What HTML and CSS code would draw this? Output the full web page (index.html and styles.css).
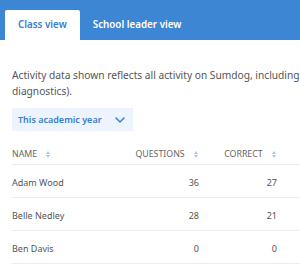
FILE: index.html
```html
<!DOCTYPE html>
<html lang="en">
<head>
<meta charset="UTF-8" />
<meta name="viewport" content="width=device-width, initial-scale=1" />
<title>Class report</title>
<link rel="stylesheet" href="styles.css">
</head>
<body>
  <div class="tabs">
    <div class="tab active">Class view</div>
    <div class="tab">School leader view</div>
  </div>

  <div class="content">
    <p class="note">Activity data shown reflects all activity on Sumdog, including Insights (placement<br>diagnostics).</p>

    <div class="period">
      This academic year
      <svg width="10" height="6" viewBox="0 0 10 6"><path d="M1 1l4 4 4-4" fill="none" stroke="#3a7fcc" stroke-width="1.5" stroke-linecap="round" stroke-linejoin="round"/></svg>
    </div>

    <table class="report">
      <colgroup>
        <col class="col-name"><col class="col-num"><col class="col-num"><col class="col-wide">
      </colgroup>
      <thead>
        <tr>
          <th class="left">Name <span class="sort"></span></th>
          <th>Questions <span class="sort"></span></th>
          <th>Correct <span class="sort"></span></th>
          <th>Accuracy <span class="sort"></span></th>
        </tr>
      </thead>
      <tbody>
        <tr><td class="left">Adam Wood</td><td>36</td><td>27</td><td>75%</td></tr>
        <tr><td class="left">Belle Nedley</td><td>28</td><td>21</td><td>75%</td></tr>
        <tr><td class="left">Ben Davis</td><td>0</td><td>0</td><td>0%</td></tr>
      </tbody>
    </table>
  </div>
</body>
</html>
```

FILE: styles.css
```css
html, body {
  overflow: hidden;
}
body {
  margin: 0; padding: 0;
  font-family: "Noto Sans", "Open Sans", Arial, sans-serif;
  color: #555;
}
.tabs {
  display: flex;
  align-items: flex-end;
  height: 40px;
  padding-left: 5px;
  background: #3d86d3;
}
.tab {
  height: 30px;
  line-height: 30px;
  padding: 0 13px;
  font-size: 9.8px;
  font-weight: 600;
  color: #fff;
}
.tab.active {
  background: #fff;
  color: #3b7ec8;
  border-radius: 2px 2px 0 0;
}
.content {
  padding: 0 12px;
}
.note {
  margin: 27px 0 0;
  width: 500px;
  font-size: 10.2px;
  line-height: 16px;
}
.period {
  display: inline-flex;
  align-items: center;
  gap: 13px;
  margin-top: 9px;
  height: 23px;
  padding: 0 8px 0 6px;
  background: #edf4fd;
  color: #3b7ec8;
  font-size: 9px;
  font-weight: 600;
}
.report {
  margin-top: 12px;
  border-collapse: collapse;
  table-layout: fixed;
  width: 385px;
  font-size: 9px;
}
.col-name { width: 109px; }
.col-num { width: 78px; }
.col-wide { width: 120px; }
.report th {
  height: 21px;
  padding: 0;
  text-align: right;
  font-size: 8.8px;
  font-weight: 400;
  color: #666;
  text-transform: uppercase;
  border-bottom: 1px solid #ececec;
  white-space: nowrap;
  vertical-align: middle;
}
.report td {
  height: 30px;
  padding: 2px 0 0;
  text-align: right;
  border-bottom: 1px solid #ececec;
  white-space: nowrap;
}
.report .left {
  text-align: left;
}
.sort {
  display: inline-block;
  position: relative;
  width: 5px;
  height: 7px;
  margin-left: 7px;
  vertical-align: -1px;
}
.sort::before, .sort::after {
  content: "";
  position: absolute;
  left: 0;
  border-left: 2.5px solid transparent;
  border-right: 2.5px solid transparent;
}
.sort::before {
  top: 0;
  border-bottom: 3px solid #a9c8ee;
}
.sort::after {
  bottom: 0;
  border-top: 3px solid #a9c8ee;
}
```
